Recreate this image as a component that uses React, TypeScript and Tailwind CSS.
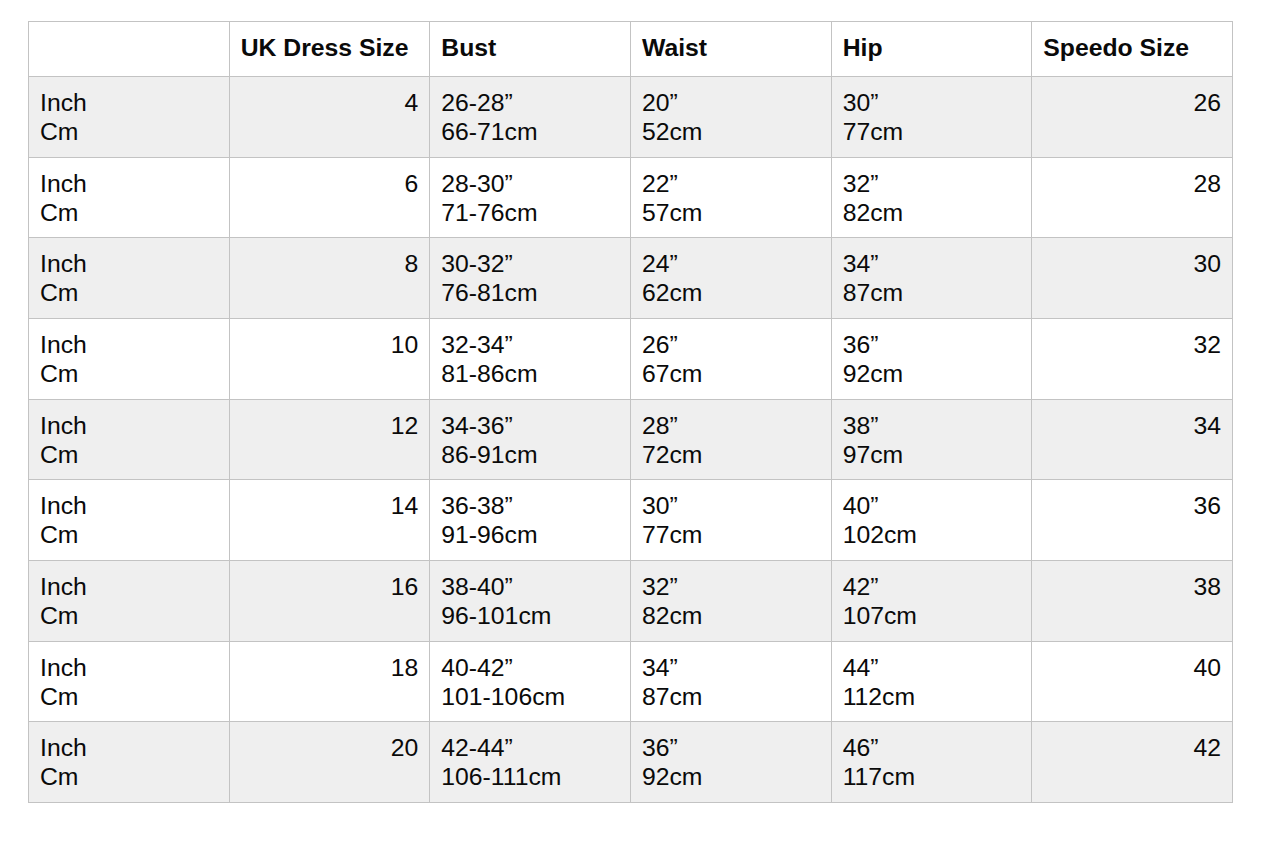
import React from 'react';

type Row = {
  uk: string;
  bust: [string, string];
  waist: [string, string];
  hip: [string, string];
  speedo: string;
};

const rows: Row[] = [
  { uk: '4', bust: ['26-28”', '66-71cm'], waist: ['20”', '52cm'], hip: ['30”', '77cm'], speedo: '26' },
  { uk: '6', bust: ['28-30”', '71-76cm'], waist: ['22”', '57cm'], hip: ['32”', '82cm'], speedo: '28' },
  { uk: '8', bust: ['30-32”', '76-81cm'], waist: ['24”', '62cm'], hip: ['34”', '87cm'], speedo: '30' },
  { uk: '10', bust: ['32-34”', '81-86cm'], waist: ['26”', '67cm'], hip: ['36”', '92cm'], speedo: '32' },
  { uk: '12', bust: ['34-36”', '86-91cm'], waist: ['28”', '72cm'], hip: ['38”', '97cm'], speedo: '34' },
  { uk: '14', bust: ['36-38”', '91-96cm'], waist: ['30”', '77cm'], hip: ['40”', '102cm'], speedo: '36' },
  { uk: '16', bust: ['38-40”', '96-101cm'], waist: ['32”', '82cm'], hip: ['42”', '107cm'], speedo: '38' },
  { uk: '18', bust: ['40-42”', '101-106cm'], waist: ['34”', '87cm'], hip: ['44”', '112cm'], speedo: '40' },
  { uk: '20', bust: ['42-44”', '106-111cm'], waist: ['36”', '92cm'], hip: ['46”', '117cm'], speedo: '42' },
];

const headers = ['', 'UK Dress Size', 'Bust', 'Waist', 'Hip', 'Speedo Size'];

const cell = 'border border-[#c3c3c3] px-[11px] pt-[11px] pb-[10.67px] align-top';

const TwoLine: React.FC<{ lines: [string, string] }> = ({ lines }) => (
  <>
    <div>{lines[0]}</div>
    <div>{lines[1]}</div>
  </>
);

const App: React.FC = () => {
  return (
    <div className="min-h-screen bg-white pl-[28px] pt-[21px] font-['Liberation_Sans',Arial,sans-serif] text-[24.75px] leading-[29px] text-[#0a0a0a]">
      <table className="w-[1205px] table-fixed border-collapse">
        <thead>
          <tr>
            {headers.map((h, i) => (
              <th
                key={i}
                className="border border-[#c3c3c3] px-[11px] pt-[11px] pb-[14px] text-left align-top font-bold"
              >
                {h}
              </th>
            ))}
          </tr>
        </thead>
        <tbody>
          {rows.map((r, i) => (
            <tr key={r.uk} className={i % 2 === 0 ? 'bg-[#efefef]' : 'bg-white'}>
              <td className={cell}>
                <div>Inch</div>
                <div>Cm</div>
              </td>
              <td className={`${cell} text-right`}>{r.uk}</td>
              <td className={cell}>
                <TwoLine lines={r.bust} />
              </td>
              <td className={cell}>
                <TwoLine lines={r.waist} />
              </td>
              <td className={cell}>
                <TwoLine lines={r.hip} />
              </td>
              <td className={`${cell} text-right`}>{r.speedo}</td>
            </tr>
          ))}
        </tbody>
      </table>
    </div>
  );
};

export default App;
